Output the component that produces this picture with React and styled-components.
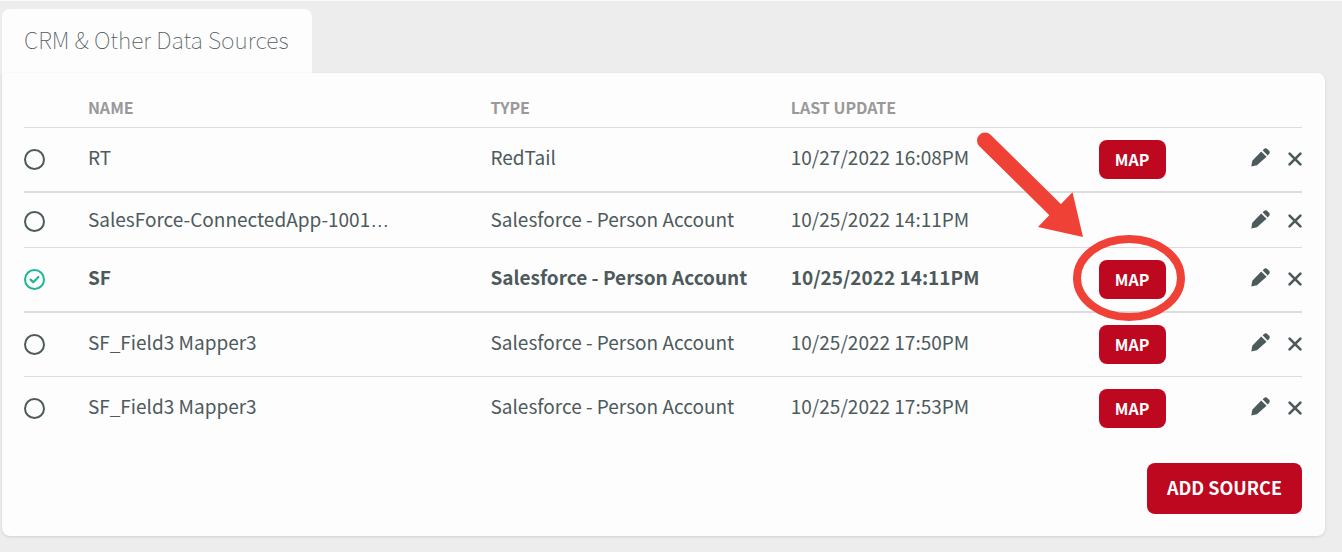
import React, { useState } from "react";
import styled, { createGlobalStyle } from "styled-components";

const GlobalStyle = createGlobalStyle`
  * { box-sizing: border-box; }
  body {
    margin: 0;
    background: #ededed;
    color: #4d5a5c;
    font-family: "Source Sans Pro", "Noto Sans CJK KR", "Noto Sans", sans-serif;
    font-size: 19px;
    line-height: 28px;
  }
`;

const Page = styled.main`
  padding: 8px 17px 16px 2px;
  border-top: 1px solid #fafafa;
`;

const Tab = styled.h1`
  width: fit-content;
  margin: 0;
  padding: 14px 23px 18px 22px;
  border-radius: 8px 8px 0 0;
  background: #fdfdfd;
  font-size: 23px;
  font-weight: 100;
  line-height: 32px;
  white-space: nowrap;
`;

const Panel = styled.section`
  padding: 20px 23px 22px 22px;
  border-radius: 0 8px 8px 8px;
  background: #fdfdfd;
  box-shadow: 0 1px 3px rgba(0, 0, 0, 0.12);
`;

const Table = styled.table`
  width: 100%;
  table-layout: fixed;
  border-collapse: separate;
  border-spacing: 0;
`;

const Col = styled.col`
  width: ${(p) => p.$width};
`;

const HeadCell = styled.th`
  height: 35px;
  padding: 0 0 6px;
  border-bottom: 1px solid #dcdcdc;
  color: #999;
  font-size: 16px;
  font-weight: 700;
  text-align: left;
`;

const Cell = styled.td`
  height: 55px;
  padding: 12px 0;
  vertical-align: baseline;
  white-space: nowrap;
  text-align: ${(p) => p.$align || "left"};
`;

const Row = styled.tr`
  font-weight: ${(p) => (p.$active ? 700 : 400)};

  & > ${Cell} {
    border-bottom: 1px solid #dcdcdc;
  }
  &:nth-child(odd) > ${Cell} {
    border-bottom-width: 2px;
  }
  &:last-child > ${Cell} {
    border-bottom: 0;
  }
`;

const Ellipsis = styled.span`
  font-family: "Liberation Sans", sans-serif;
`;

const RadioMark = styled.label`
  display: inline-grid;
  vertical-align: -5px;
  cursor: pointer;

  & > * {
    grid-area: 1 / 1;
  }
`;

const Radio = styled.input`
  appearance: none;
  width: 21px;
  height: 21px;
  margin: 0;
  border: 2px solid #4d5a5c;
  border-radius: 50%;
  cursor: pointer;

  &:checked {
    border-color: #1fb597;
  }
`;

const Tick = styled.svg`
  width: 21px;
  height: 21px;
  pointer-events: none;
`;

const Button = styled.button`
  display: block;
  border: 0;
  border-radius: 8px;
  background: #be0820;
  color: #fff;
  font: inherit;
  font-weight: 700;
  font-size: ${(p) => (p.$large ? "18px" : "16px")};
  line-height: ${(p) => (p.$large ? "31px" : "23px")};
  padding: ${(p) => (p.$large ? "9px 20px 11px" : "8px 17px 8px 16px")};
  cursor: pointer;
`;

const IconButton = styled.button`
  margin: 0 0 0 18px;
  padding: 0;
  border: 0;
  background: none;
  color: #4d5a5c;
  line-height: 0;
  vertical-align: ${(p) => p.$drop};
  cursor: pointer;
`;

const Anchor = styled.span`
  position: relative;
  display: inline-block;
  vertical-align: -1px;
`;

const Callout = styled.svg`
  position: absolute;
  left: -129px;
  top: -135px;
  width: 220px;
  height: 200px;
  pointer-events: none;
`;

const Footer = styled.div`
  display: flex;
  justify-content: flex-end;
  padding-top: 23px;
`;

function Pencil() {
  return (
    <svg width="19" height="19" viewBox="0 0 19 19" fill="currentColor" aria-hidden="true">
      <path d="M10.2 3.400 15.500 8.800 6 17.200 0.300 18.500 1.300 12.700Z" />
      <path d="M11.600 2.300 13.700.5q1.200-.7 2.400.2l2.200 2.300q.9 1.200.1 2.400L16.700 7.500Z" />
    </svg>
  );
}

function Cross() {
  return (
    <svg width="14" height="14" viewBox="0 0 14 14" fill="none" stroke="currentColor" strokeWidth="2.6" strokeLinecap="round" aria-hidden="true">
      <path d="M1.600 1.600 12.400 12.400M12.400 1.600 1.600 12.400" />
    </svg>
  );
}

function MapCallout() {
  return (
    <Callout viewBox="0 0 220 200" aria-hidden="true">
      <path d="M15 15.500 87 86.500" stroke="#f04137" strokeWidth="16" strokeLinecap="round" />
      <path d="M102.500 67.300 113 112 68 102 79 90.500 91 79Z" fill="#f04137" />
      <ellipse cx="159" cy="153" rx="52" ry="39" fill="none" stroke="#f04137" strokeWidth="8" />
    </Callout>
  );
}

const NAME_LIMIT = 28;

function SourceName({ name }) {
  if (name.length <= NAME_LIMIT) return name;
  return (
    <span title={name}>
      {name.slice(0, NAME_LIMIT)}
      <Ellipsis>…</Ellipsis>
    </span>
  );
}

const sources = [
  { name: "RT", type: "RedTail", updated: "10/27/2022 16:08PM", map: true },
  { name: "SalesForce-ConnectedApp-10012022", type: "Salesforce - Person Account", updated: "10/25/2022 14:11PM" },
  { name: "SF", type: "Salesforce - Person Account", updated: "10/25/2022 14:11PM", map: true, callout: true },
  { name: "SF_Field3 Mapper3", type: "Salesforce - Person Account", updated: "10/25/2022 17:50PM", map: true },
  { name: "SF_Field3 Mapper3", type: "Salesforce - Person Account", updated: "10/25/2022 17:53PM", map: true },
];

export default function App() {
  const [active, setActive] = useState(2);

  return (
    <Page>
      <GlobalStyle />
      <Tab>CRM &amp; Other Data Sources</Tab>
      <Panel>
        <Table>
          <colgroup>
            <Col $width="5%" />
            <Col $width="31.5%" />
            <Col $width="23.5%" />
            <Col $width="24.1%" />
            <Col $width="8%" />
            <Col />
          </colgroup>
          <thead>
            <tr>
              <HeadCell aria-label="Active" />
              <HeadCell scope="col">NAME</HeadCell>
              <HeadCell scope="col">TYPE</HeadCell>
              <HeadCell scope="col">LAST UPDATE</HeadCell>
              <HeadCell aria-label="Mapping" />
              <HeadCell aria-label="Actions" />
            </tr>
          </thead>
          <tbody>
            {sources.map((s, i) => (
              <Row key={i} $active={i === active}>
                <Cell>
                  <RadioMark>
                    <Radio
                      type="radio"
                      name="source"
                      aria-label={s.name}
                      checked={i === active}
                      onChange={() => setActive(i)}
                    />
                    {i === active && (
                      <Tick viewBox="0 0 21 21" fill="none" stroke="#1fb597" strokeWidth="2.2" strokeLinecap="round" strokeLinejoin="round" aria-hidden="true">
                        <path d="M6.600 10.600 9.300 13.200 14.400 8" />
                      </Tick>
                    )}
                  </RadioMark>
                </Cell>
                <Cell><SourceName name={s.name} /></Cell>
                <Cell>{s.type}</Cell>
                <Cell>{s.updated}</Cell>
                <Cell>
                  {s.map && (
                    <Anchor>
                      <Button type="button">MAP</Button>
                      {s.callout && <MapCallout />}
                    </Anchor>
                  )}
                </Cell>
                <Cell $align="right">
                  <IconButton type="button" aria-label="Edit" $drop="-2px"><Pencil /></IconButton>
                  <IconButton type="button" aria-label="Delete" $drop="-1px"><Cross /></IconButton>
                </Cell>
              </Row>
            ))}
          </tbody>
        </Table>
        <Footer>
          <Button type="button" $large>ADD SOURCE</Button>
        </Footer>
      </Panel>
    </Page>
  );
}
